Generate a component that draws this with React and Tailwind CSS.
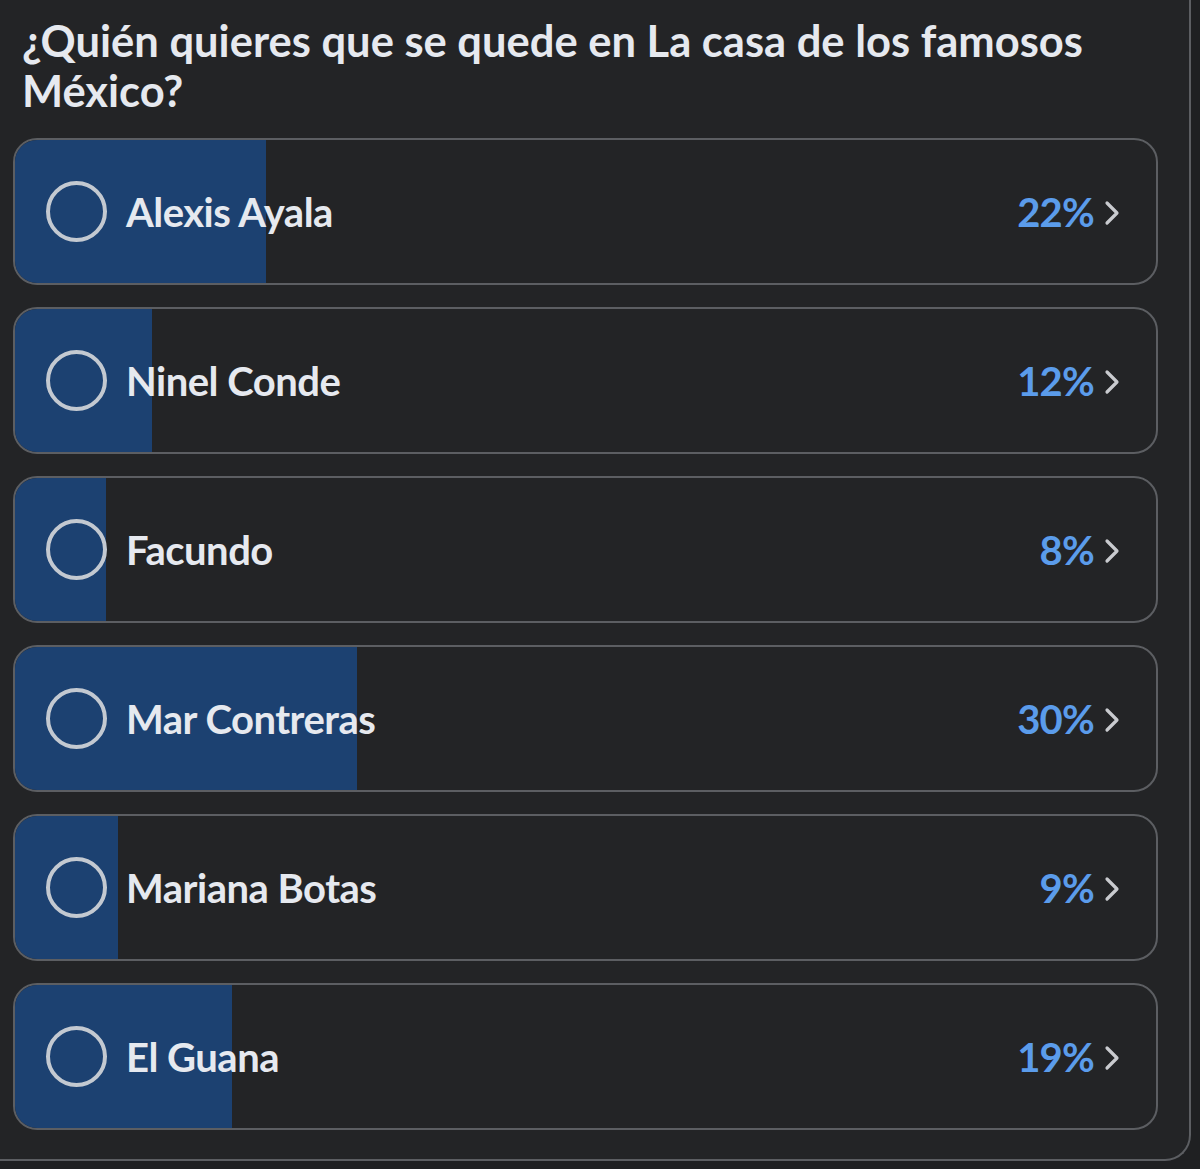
import React from "react";

const options = [
  { name: "Alexis Ayala", pct: 22 },
  { name: "Ninel Conde", pct: 12 },
  { name: "Facundo", pct: 8 },
  { name: "Mar Contreras", pct: 30 },
  { name: "Mariana Botas", pct: 9 },
  { name: "El Guana", pct: 19 },
];

function Chevron() {
  return (
    <svg width="16" height="26" viewBox="0 0 16 26" fill="none">
      <polyline
        points="3,3 13,13 3,23"
        stroke="#c9cbcf"
        strokeWidth="3.2"
        strokeLinecap="round"
        strokeLinejoin="round"
      />
    </svg>
  );
}

function Row({ name, pct }) {
  return (
    <div className="relative h-[147px] w-[1145px] overflow-hidden rounded-[24px] border-2 border-[#5c5e62] bg-[#232426]">
      <div
        className="absolute left-0 top-0 h-full bg-[#1c4171]"
        style={{ width: `${pct}%` }}
      />
      <div className="relative flex h-full items-center pl-[31px] pr-[36px]">
        <div className="h-[61px] w-[61px] rounded-full border-[4px] border-[#c3c9d1]" />
        <div className="ml-[19px] flex-1 text-[40px] font-bold tracking-[-0.5px] text-[#e6e9ef]">
          {name}
        </div>
        <div className="text-[40px] font-bold tracking-[-0.8px] text-[#5b9ceb]">{pct}%</div>
        <div className="ml-[10px] mt-[2px]">
          <Chevron />
        </div>
      </div>
    </div>
  );
}

export default function App() {
  return (
    <div
      className="h-[1169px] w-[1200px] overflow-hidden bg-[#1f2022]"
      style={{ fontFamily: "Lato, 'Open Sans', sans-serif" }}
    >
      <div className="h-[1161px] w-[1191px] rounded-br-[26px] border-b-2 border-r-2 border-[#5c5e62] bg-[#232426]">
        <div className="pl-[22px] pt-[15px] text-[43.5px] font-bold leading-[50px] text-[#e6e9ef]">
          ¿Quién quieres que se quede en La casa de los famosos
          <br />
          México?
        </div>
        <div className="mt-[23px] flex flex-col gap-[22px] pl-[13px]">
          {options.map((o) => (
            <Row key={o.name} {...o} />
          ))}
        </div>
      </div>
    </div>
  );
}
